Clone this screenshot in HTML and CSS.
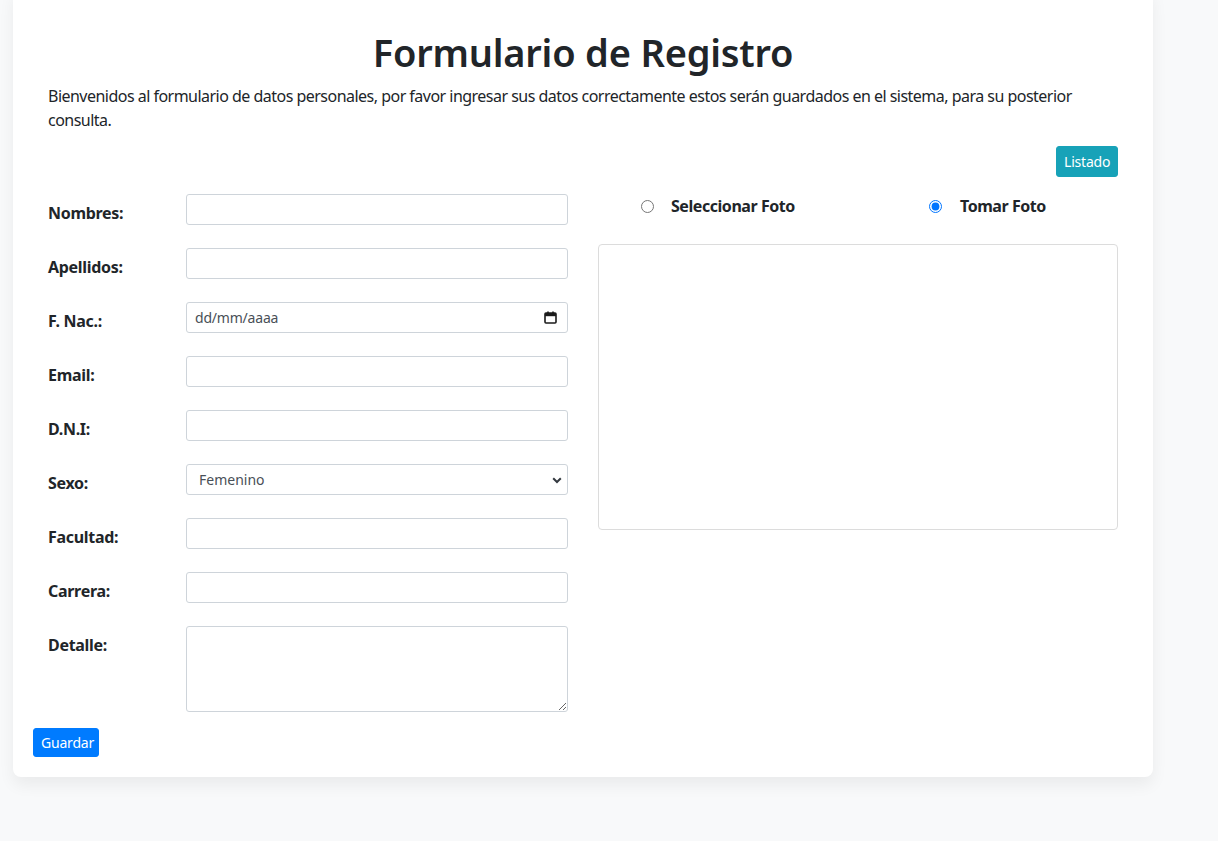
FILE: index.html
```html
<!DOCTYPE html>
<html lang="es">
<head>
<meta charset="utf-8">
<title>Formulario de Registro</title>
<link rel="stylesheet" href="styles.css">
</head>
<body>
<div class="card">
  <div class="inner">
    <h1 class="title">Formulario de Registro</h1>
    <p class="intro">Bienvenidos al formulario de datos personales, por favor ingresar sus datos correctamente estos serán guardados en el sistema, para su posterior consulta.</p>
    <div class="toolbar"><button class="btn btn-info">Listado</button></div>
    <div class="row">
      <div class="col">
        <div class="field"><label class="lbl">Nombres:</label><input class="ctrl" type="text"></div>
        <div class="field"><label class="lbl">Apellidos:</label><input class="ctrl" type="text"></div>
        <div class="field"><label class="lbl">F. Nac.:</label>
          <div class="ctrl date"><span class="date-text">dd/mm/aaaa</span>
            <svg class="cal" width="13" height="13" viewBox="0 0 13 13"><rect x="1" y="2" width="11" height="10" rx="1" fill="none" stroke="#1b1b1b" stroke-width="1.6"/><rect x="1" y="2" width="11" height="3.2" fill="#1b1b1b"/><rect x="3.2" y="0.5" width="1.6" height="2.5" fill="#1b1b1b"/><rect x="8.2" y="0.5" width="1.6" height="2.5" fill="#1b1b1b"/></svg>
          </div>
        </div>
        <div class="field"><label class="lbl">Email:</label><input class="ctrl" type="text"></div>
        <div class="field"><label class="lbl">D.N.I:</label><input class="ctrl" type="text"></div>
        <div class="field"><label class="lbl">Sexo:</label>
          <div class="select-wrap">
            <select class="ctrl sel"><option>Femenino</option><option>Masculino</option></select>
            <svg class="chev" width="10" height="7" viewBox="0 0 10 7"><path d="M1.2 1.2 L5 5 L8.8 1.2" fill="none" stroke="#343a40" stroke-width="2"/></svg>
          </div>
        </div>
        <div class="field"><label class="lbl">Facultad:</label><input class="ctrl" type="text"></div>
        <div class="field"><label class="lbl">Carrera:</label><input class="ctrl" type="text"></div>
        <div class="field"><label class="lbl">Detalle:</label><textarea class="ctrl area"></textarea></div>
      </div>
      <div class="col">
        <div class="radios">
          <label class="opt opt-1"><input type="radio" name="foto" class="radio">Seleccionar Foto</label>
          <label class="opt opt-2"><input type="radio" name="foto" class="radio" checked>Tomar Foto</label>
        </div>
        <div class="photo"></div>
      </div>
    </div>
  </div>
  <button class="btn btn-primary">Guardar</button>
</div>
</body>
</html>
```
FILE: styles.css
```css
* { box-sizing: border-box; }
html, body { margin: 0; }
body {
  background: #f8f9fa;
  font-family: "Noto Sans", "Open Sans", sans-serif;
  font-size: 16px;
  line-height: 1.5;
  color: #212529;
  height: 841px;
  overflow: hidden;
}
.card {
  width: 1140px;
  margin: -12px 0 0 13px;
  background: #fff;
  border-radius: 8px;
  box-shadow: 0 0.5rem 1rem rgba(0,0,0,0.06);
  padding: 40px 20px 20px;
}
.inner { padding: 0 15px; }
.title {
  margin: 0 0 8px;
  font-size: 38px;
  font-weight: 600;
  line-height: 48px;
  text-align: center;
  letter-spacing: -0.2px;
}
.intro {
  margin: 0 0 14px;
  font-size: 16px;
  line-height: 24px;
  letter-spacing: -0.52px;
}
.toolbar { display: flex; justify-content: flex-end; margin-bottom: 17px; }
.btn {
  font-family: inherit;
  font-size: 14px;
  color: #fff;
  border: 1px solid transparent;
  border-radius: 3px;
  padding: 0 7px;
  cursor: pointer;
  letter-spacing: -0.2px;
}
.btn-info { background: #17a2b8; border-color: #17a2b8; height: 31px; width: 62px; }
.btn-primary { background: #007bff; border-color: #007bff; height: 29px; width: 66px; }
.row { display: flex; gap: 30px; }
.col { flex: 1; min-width: 0; }
.field { display: flex; align-items: flex-start; margin-bottom: 16px; }
.lbl {
  width: 138px;
  flex: none;
  padding: 7px 0;
  font-weight: 700;
  line-height: 24px;
  letter-spacing: -0.3px;
}
.ctrl {
  flex: 1;
  min-width: 0;
  height: 31px;
  border: 1px solid #ced4da;
  border-radius: 3px;
  background: #fff;
  font-family: inherit;
  font-size: 14px;
  color: #495057;
  padding: 4px 8px;
  margin: 0;
}
.date { display: flex; align-items: center; justify-content: space-between; }
.date-text { color: #495057; letter-spacing: -0.2px; }
.cal { margin-right: 2px; }
.select-wrap { flex: 1; position: relative; display: flex; }
.sel { appearance: none; -webkit-appearance: none; padding-left: 12px; }
.chev { position: absolute; right: 6px; top: 13px; pointer-events: none; }
.area { height: 86px; resize: vertical; }
.radios {
  display: flex;
  height: 24px;
  margin-bottom: 26px;
  font-weight: 700;
  line-height: 24px;
  letter-spacing: -0.45px;
}
.opt { display: flex; align-items: center; }
.opt-1 { margin-left: 43px; width: 288px; }
.radio { width: 13px; height: 13px; margin: 0 17px 0 0; accent-color: #0075ff; }
.opt-2 .radio { margin-right: 18px; }
.photo {
  height: 286px;
  border: 1px solid #dcdcdc;
  border-radius: 4px;
}
```
